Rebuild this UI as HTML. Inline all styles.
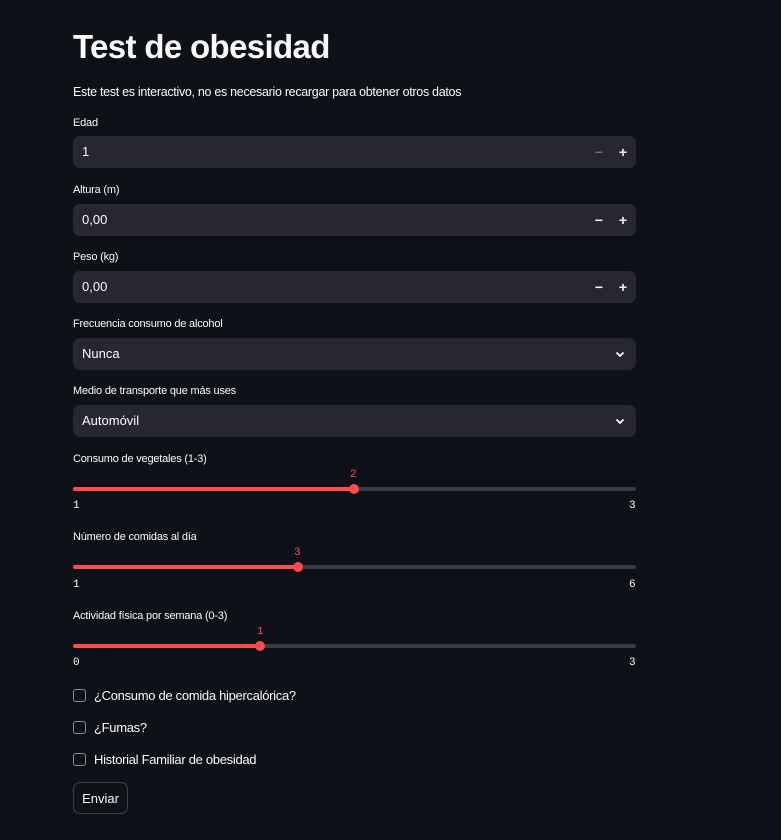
<!DOCTYPE html>
<html><head><meta charset="utf-8"><style>
*{margin:0;padding:0;box-sizing:border-box}
body{width:781px;height:840px;background:#0e1117;color:#fafafa;font-family:"Liberation Sans",sans-serif;position:relative;overflow:hidden}
.a{position:absolute}
h1{position:absolute;left:73px;top:28px;font-size:33px;font-weight:bold;letter-spacing:-0.65px}
.lbl{position:absolute;left:73px;font-size:11px;letter-spacing:-0.2px}
.box{position:absolute;left:73px;width:563px;height:32px;background:#262730;border-radius:7px;font-size:13px;padding-left:9px;line-height:32px}
.mn{position:absolute;right:33px;top:0;font-size:14px;font-weight:bold}
.pl{position:absolute;right:9px;top:0;font-size:14px;font-weight:bold}
.chev{position:absolute;right:11px;top:11px}
.track{position:absolute;left:73px;width:563px;height:4px;background:#3a3b44;border-radius:2px}
.fill{position:absolute;left:0;top:0;height:4px;background:#ff4b4b;border-radius:2px}
.thumb{position:absolute;top:-3px;width:10px;height:10px;border-radius:5px;background:#ff4b4b;margin-left:-5px}
.val{position:absolute;font-family:"Liberation Mono",monospace;font-size:11px;color:#ff4b4b}
.mm{position:absolute;font-family:"Liberation Mono",monospace;font-size:11px}
.cb{position:absolute;left:73px;width:13px;height:13px;border:1px solid #8b8d95;border-radius:3px}
.ct{position:absolute;left:94px;font-size:13px;letter-spacing:-0.3px}
</style></head><body>
<h1>Test de obesidad</h1>
<div class="a" style="left:73px;top:85px;font-size:12.5px;letter-spacing:-0.3px">Este test es interactivo, no es necesario recargar para obtener otros datos</div>

<div class="lbl" style="top:117px">Edad</div>
<div class="box" style="top:136px">1<span class="mn" style="color:#6b6d78">−</span><span class="pl">+</span></div>
<div class="lbl" style="top:184px">Altura (m)</div>
<div class="box" style="top:204px">0,00<span class="mn">−</span><span class="pl">+</span></div>
<div class="lbl" style="top:251px">Peso (kg)</div>
<div class="box" style="top:271px">0,00<span class="mn">−</span><span class="pl">+</span></div>
<div class="lbl" style="top:318px">Frecuencia consumo de alcohol</div>
<div class="box" style="top:338px">Nunca<svg class="chev" width="10" height="10" viewBox="0 0 10 10"><path d="M1.5 3.5L5 7l3.5-3.5" stroke="#fafafa" stroke-width="1.8" fill="none"/></svg></div>
<div class="lbl" style="top:385px">Medio de transporte que más uses</div>
<div class="box" style="top:405px">Automóvil<svg class="chev" width="10" height="10" viewBox="0 0 10 10"><path d="M1.5 3.5L5 7l3.5-3.5" stroke="#fafafa" stroke-width="1.8" fill="none"/></svg></div>

<div class="lbl" style="top:453px">Consumo de vegetales (1-3)</div>
<div class="val" style="left:350px;top:469px">2</div>
<div class="track" style="top:487px"><div class="fill" style="width:281px"></div><div class="thumb" style="left:281px"></div></div>
<div class="mm" style="left:73px;top:500px">1</div><div class="mm" style="left:629px;top:500px">3</div>

<div class="lbl" style="top:531px">Número de comidas al día</div>
<div class="val" style="left:294px;top:547px">3</div>
<div class="track" style="top:565px"><div class="fill" style="width:225px"></div><div class="thumb" style="left:225px"></div></div>
<div class="mm" style="left:73px;top:579px">1</div><div class="mm" style="left:629px;top:579px">6</div>

<div class="lbl" style="top:610px">Actividad física por semana (0-3)</div>
<div class="val" style="left:257px;top:626px">1</div>
<div class="track" style="top:644px"><div class="fill" style="width:187px"></div><div class="thumb" style="left:187px"></div></div>
<div class="mm" style="left:73px;top:657px">0</div><div class="mm" style="left:629px;top:657px">3</div>

<div class="cb" style="top:689px"></div><div class="ct" style="top:688px">¿Consumo de comida hipercalórica?</div>
<div class="cb" style="top:721px"></div><div class="ct" style="top:720px">¿Fumas?</div>
<div class="cb" style="top:753px"></div><div class="ct" style="top:752px">Historial Familiar de obesidad</div>

<div class="a" style="left:73px;top:782px;width:55px;height:32px;border:1px solid #3d3f49;border-radius:7px;font-size:13px;line-height:31px;text-align:center">Enviar</div>
</body></html>
